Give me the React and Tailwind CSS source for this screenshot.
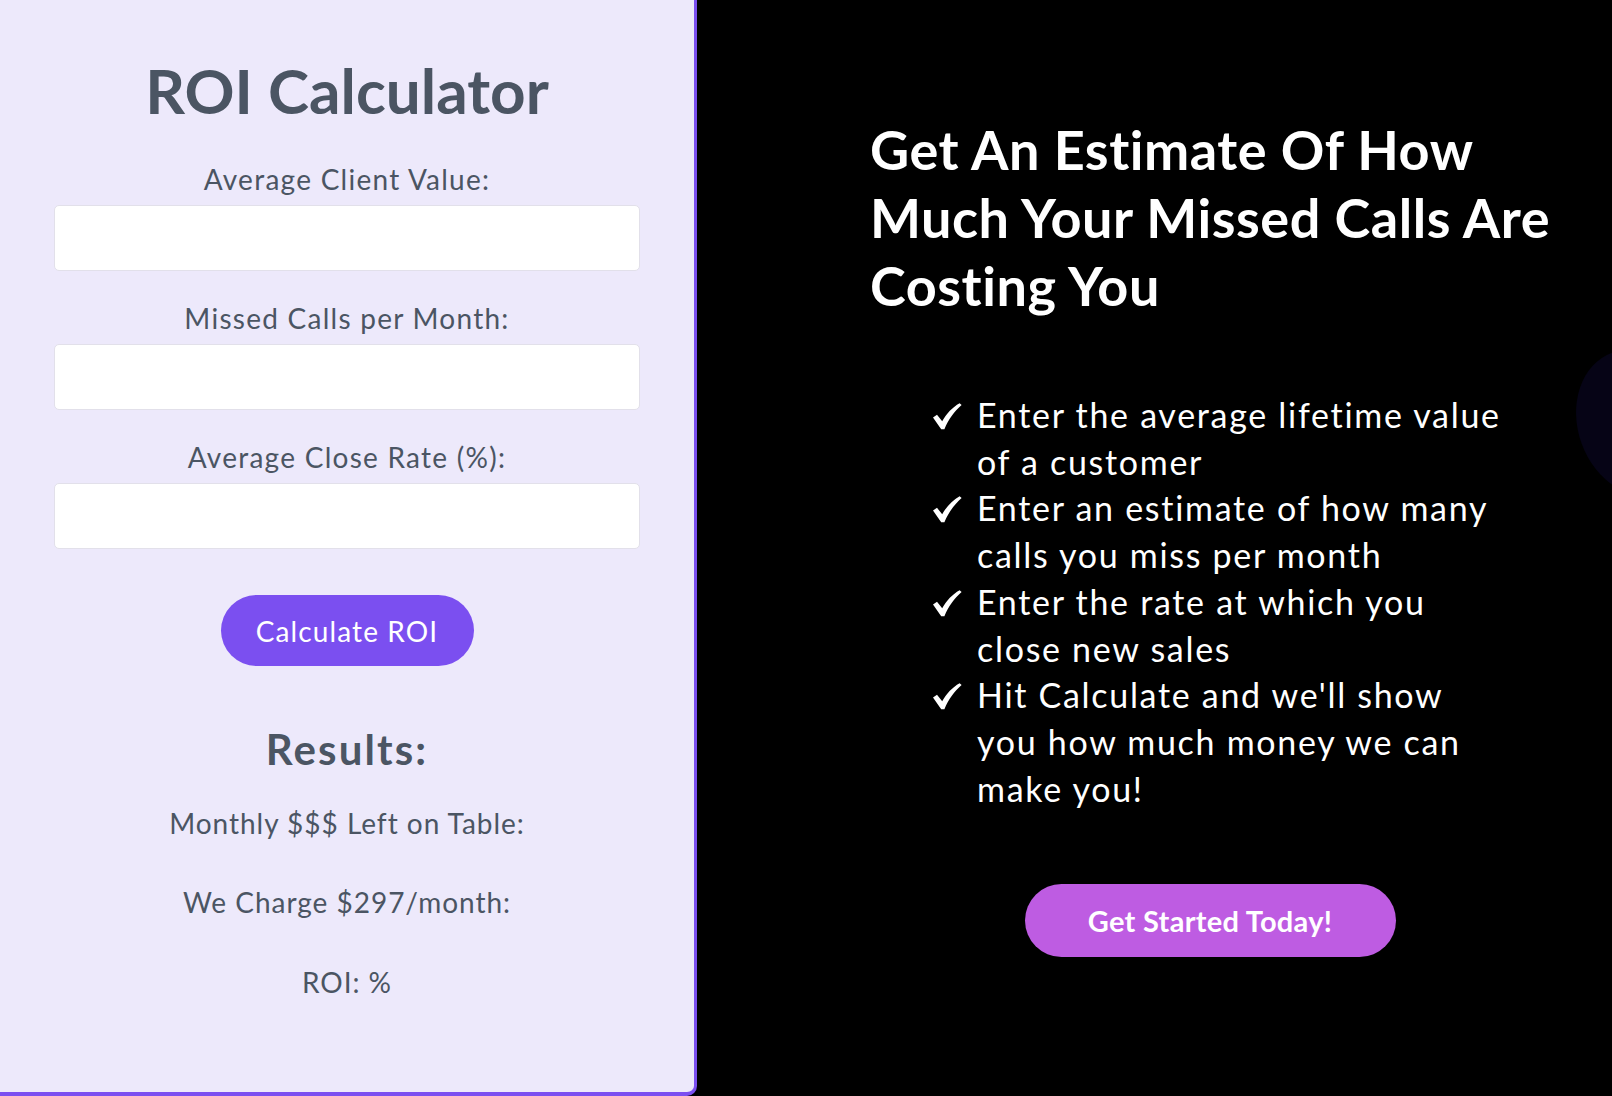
import React, { useState } from "react";

const font = { fontFamily: "Lato, 'Noto Sans', 'DejaVu Sans', sans-serif" };

function Check() {
  return (
    <svg width="30" height="27" viewBox="0 0 30 27" className="mt-[11px]" fill="white">
      <path d="M1 14.5 L5 11.8 L10.2 18.2 C14.5 10.5 20.5 4.2 27.6 0.2 L29.6 2 C22.4 8.4 16.6 16.2 12.4 26.2 L9.2 26.2 Z" />
    </svg>
  );
}

export default function App() {
  const [clientValue, setClientValue] = useState("");
  const [missedCalls, setMissedCalls] = useState("");
  const [closeRate, setCloseRate] = useState("");
  const [result, setResult] = useState(null);

  // simple calc, nothing shown until button is hit
  const calculate = () => {
    const v = parseFloat(clientValue) || 0;
    const m = parseFloat(missedCalls) || 0;
    const r = (parseFloat(closeRate) || 0) / 100;
    const lost = v * m * r;
    setResult({ lost, roi: Math.round(((lost - 297) / 297) * 100) });
  };

  const fields = [
    { label: "Average Client Value:", value: clientValue, set: setClientValue },
    { label: "Missed Calls per Month:", value: missedCalls, set: setMissedCalls },
    { label: "Average Close Rate (%):", value: closeRate, set: setCloseRate },
  ];

  const steps = [
    ["Enter the average lifetime value", "of a customer"],
    ["Enter an estimate of how many", "calls you miss per month"],
    ["Enter the rate at which you", "close new sales"],
    ["Hit Calculate and we'll show", "you how much money we can", "make you!"],
  ];

  return (
    <div
      className="relative flex w-full h-[1096px] bg-black overflow-hidden"
      style={font}
    >
      {/* Calculator panel */}
      <div className="w-[697px] h-full shrink-0 flex flex-col items-center bg-[#ede9fb] border-r-[3px] border-b-[4px] border-[#7b4ff0] rounded-br-[10px] pt-[54px] text-[#4b5563]">
        <h1 className="text-[62px] leading-[72px] font-bold">ROI Calculator</h1>

        {fields.map((f, i) => (
          <div key={i} className={`flex flex-col items-center ${i === 0 ? "mt-[37px]" : "mt-[31px]"}`}>
            <label className="text-[28px] leading-[32px] tracking-[0.045em]">{f.label}</label>
            <input
              type="number"
              value={f.value}
              onChange={(e) => f.set(e.target.value)}
              className="mt-[10px] w-[586px] h-[66px] bg-white border border-[#e2e0ea] rounded-[5px] px-4 text-[22px] outline-none"
            />
          </div>
        ))}

        <button
          onClick={calculate}
          className="mt-[46px] w-[253px] h-[71px] rounded-full bg-[#7b4ff0] text-white text-[28px] tracking-[0.04em]"
        >
          Calculate ROI
        </button>

        <h2 className="mt-[59px] text-[42px] leading-[48px] font-bold tracking-[0.05em]">Results:</h2>
        <p className="mt-[34px] text-[28px] leading-[32px] tracking-[0.035em]">
          Monthly $$$ Left on Table:{result ? ` $${result.lost.toFixed(2)}` : ""}
        </p>
        <p className="mt-[47px] text-[28px] leading-[32px] tracking-[0.035em]">We Charge $297/month:</p>
        <p className="mt-[48px] text-[28px] leading-[32px] tracking-[0.035em]">
          ROI: {result ? result.roi : ""}%
        </p>
      </div>

      {/* Info side */}
      <div className="flex-1 pl-[173px] pt-[116px] text-white">
        <div className="w-[680px] flex flex-col">
          <h2 className="text-[54px] leading-[68px] font-bold tracking-[0.01em] whitespace-nowrap">
            Get An Estimate Of How
            <br />
            Much Your Missed Calls Are
            <br />
            Costing You
          </h2>

          <ul className="mt-[72px] ml-[62px] text-[34px] leading-[46.7px] tracking-[0.05em]">
            {steps.map((lines, i) => (
              <li key={i} className="flex">
                <span className="w-[45px] shrink-0">
                  <Check />
                </span>
                <span className="whitespace-nowrap">
                  {lines.map((l, j) => (
                    <span key={j} className="block">
                      {l}
                    </span>
                  ))}
                </span>
              </li>
            ))}
          </ul>

          <button className="mt-[72px] self-center w-[371px] h-[73px] rounded-full bg-[#be5ce2] text-white text-[29px] font-bold tracking-[0.01em]">
            Get Started Today!
          </button>
        </div>
      </div>

      {/* faint shape peeking in at the right edge */}
      <div className="absolute left-[1578px] top-[348px] w-[120px] h-[150px] rounded-[50%] bg-[#060416] rotate-[-20deg]" />
    </div>
  );
}
